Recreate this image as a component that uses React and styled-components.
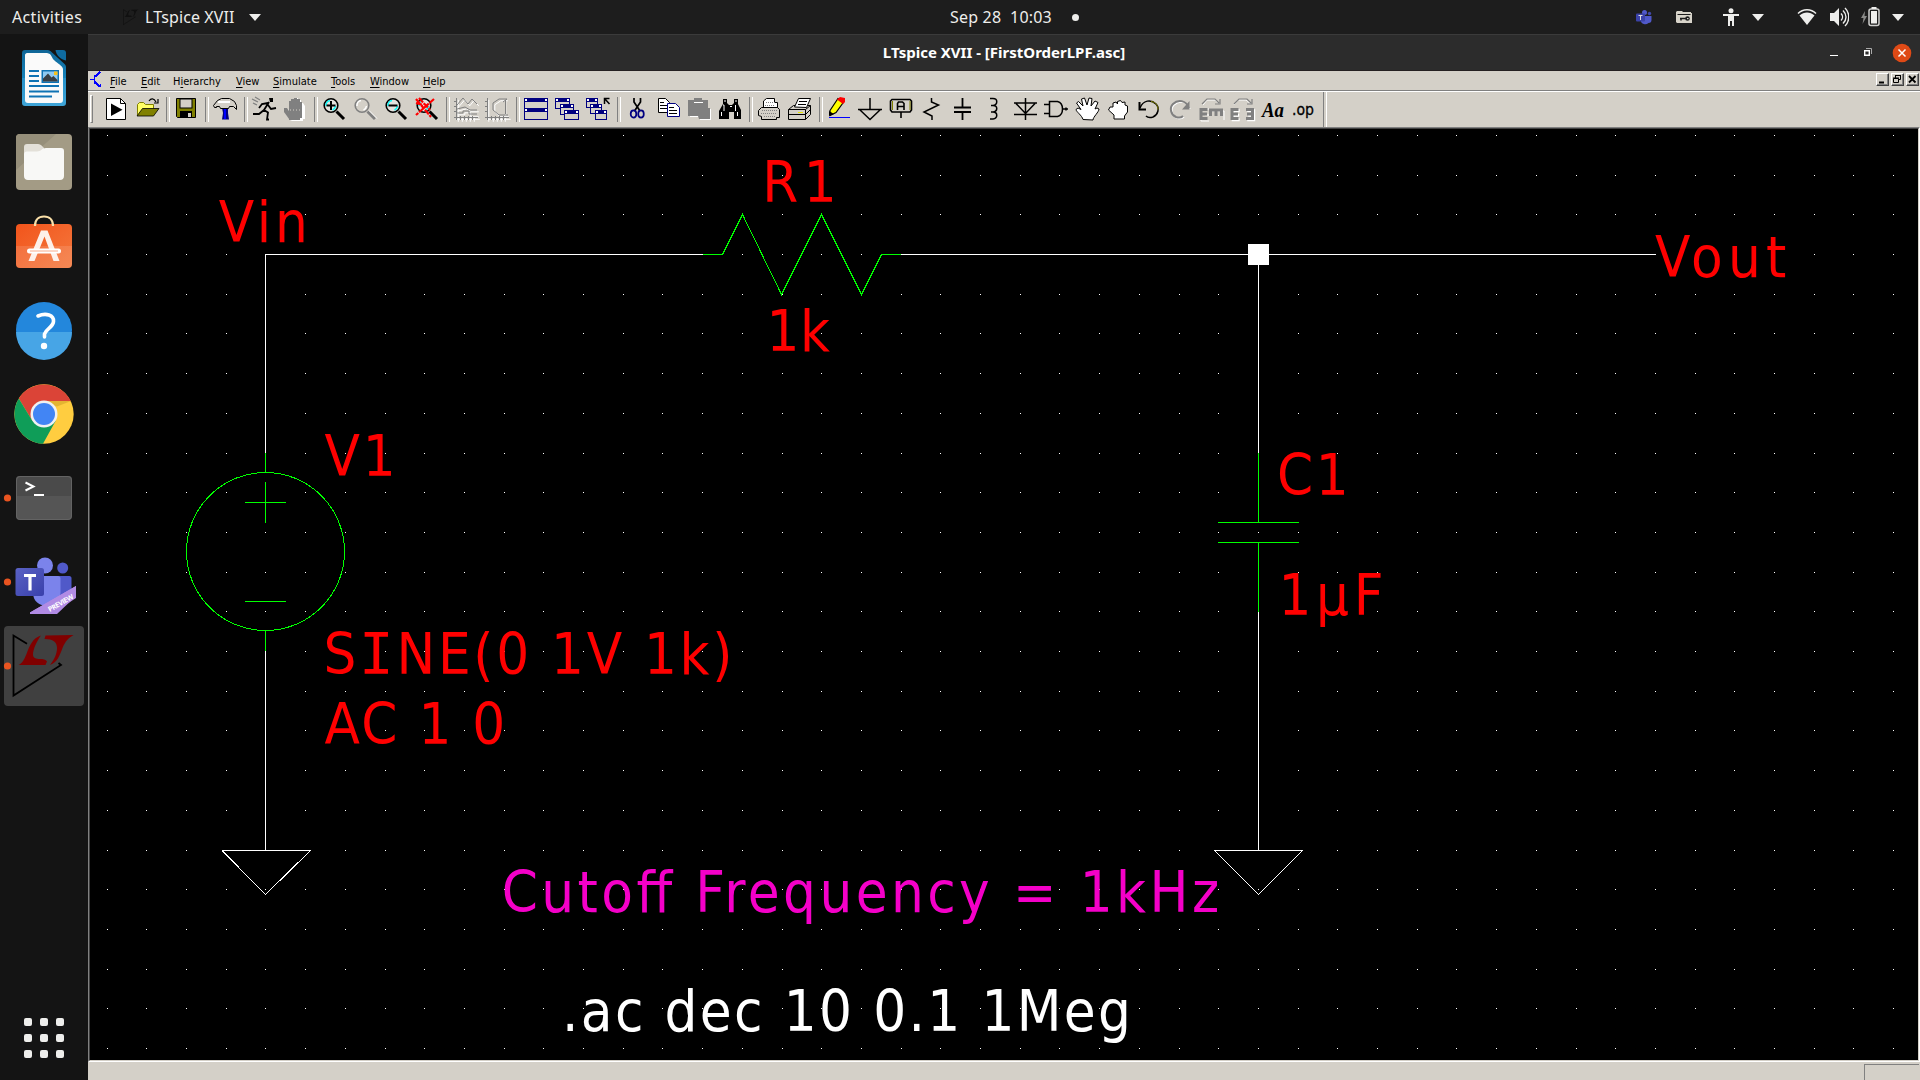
import React from "react";
import styled, { createGlobalStyle, css } from "styled-components";

const FACE = "#d4d0c8";
const UI = `"Noto Sans", "Open Sans", sans-serif`;

const GlobalStyle = createGlobalStyle`
  * { box-sizing: border-box; }
  body { margin: 0; background: #141414; overflow: hidden; }
`;

const Screen = styled.div`
  width: 1920px;
  height: 1080px;
  display: flex;
  flex-direction: column;
  background: #141414;
  font-family: ${UI};
`;

/* ---------- top panel ---------- */
const Panel = styled.header`
  height: 34px;
  flex: none;
  display: flex;
  align-items: center;
  background: #1d1d1d;
  color: #eeeeec;
  font-size: 16px;
  line-height: 34px;
  white-space: pre;
`;
const PanelLeft = styled.div`
  width: 950px;
  display: flex;
  align-items: center;
  padding-left: 12px;
`;
const PanelText = styled.span`
  width: ${(p) => p.$w}px;
  letter-spacing: ${(p) => p.$ls || 0}px;
`;
const Spacer = styled.span`
  width: ${(p) => p.$w}px;
  flex: none;
`;
const Dot = styled.span`
  width: 7px;
  height: 7px;
  border-radius: 50%;
  background: #eeeeec;
`;
const Tray = styled.div`
  margin-left: auto;
  padding-right: 16px;
  display: flex;
  align-items: center;
  svg { display: block; }
`;

/* ---------- dock ---------- */
const Body = styled.div`
  flex: 1;
  min-height: 0;
  display: flex;
`;
const Dock = styled.nav`
  width: 88px;
  flex: none;
  display: flex;
  flex-direction: column;
  padding: 2px 0 22px;
  background: #141414;
`;
const DockItem = styled.div`
  height: 84px;
  svg { display: block; }
`;
const AppsGrid = styled.div`
  margin: auto 0 0 24px;
  display: grid;
  grid-template-columns: repeat(3, 8px);
  grid-auto-rows: 8px;
  gap: 8px;
`;
const AppsDot = styled.span`
  border-radius: 2px;
  background: #eeeeec;
`;

/* ---------- window ---------- */
const Win = styled.main`
  flex: 1;
  min-width: 0;
  display: flex;
  flex-direction: column;
  background: ${FACE};
`;
const TitleBar = styled.div`
  height: 37px;
  flex: none;
  display: grid;
  grid-template-columns: 1fr auto 1fr;
  align-items: center;
  background: #2c2c2c;
  border-top: 1px solid #3b3b3b;
  border-bottom: 1px solid #241f21;
  color: #fff;
  font: 700 15px/35px ${UI};
`;
const TitleText = styled.span`
  grid-column: 2;
  letter-spacing: ${(p) => p.$ls}px;
`;
const TitleButtons = styled.div`
  display: flex;
  justify-content: flex-end;
  padding-right: 8px;
  svg { display: block; }
`;
const MenuBar = styled.div`
  height: 21px;
  flex: none;
  display: flex;
  align-items: flex-start;
  padding-left: 2px;
  border-bottom: 1px solid #fff;
  box-shadow: inset 0 -1px 0 #808080;
  background: ${FACE};
  color: #000;
  font: 11px/20px "DejaVu Sans Condensed", "DejaVu Sans", sans-serif;
  font-stretch: condensed;
  svg { display: block; }
`;
const MenuItem = styled.span`
  width: ${(p) => p.$w}px;
  height: 20px;
  padding-top: 1px;
  white-space: nowrap;
  letter-spacing: ${(p) => p.$ls || 0}px;
  u { text-underline-offset: 2px; text-decoration-thickness: 1px; }
`;
const MdiButtons = styled.div`
  display: flex;
  gap: 2px;
  margin: 2px 1px 0 auto;
`;
const MdiButton = styled.span`
  width: 13px;
  height: 13px;
  background: ${FACE};
  border: 1px solid;
  border-color: #fff #404040 #404040 #fff;
  box-shadow: inset -1px -1px 0 #808080;
`;
const ToolBar = styled.div`
  height: 35px;
  flex: none;
  display: flex;
  padding-left: 2px;
  background: ${FACE};
`;
const Grip = styled.span`
  width: 3px;
  height: 28px;
  margin: 3px 7.5px 0 0;
  border: 1px solid;
  border-color: #fff #808080 #808080 #fff;
`;
const ToolButton = styled.span`
  width: 31px;
  flex: none;
  padding: 5px 3.5px 0;
  svg { display: block; }
`;
const ToolSep = styled.span`
  width: 8px;
  flex: none;
  padding-left: 3px;
  &::before {
    content: "";
    display: block;
    width: 2px;
    height: ${(p) => (p.$tall ? 35 : 25)}px;
    margin-top: ${(p) => (p.$tall ? 0 : 5)}px;
    border-left: 1px solid #808080;
    border-right: 1px solid #fff;
  }
`;
const Sheet = styled.div`
  flex: 1;
  min-height: 0;
  background: #000;
  border: solid;
  border-width: 1px 1px 1px 1px;
  border-color: #808080 #fff #fff #808080;
`;
const SheetInner = styled.div`
  width: 1830px;
  height: 933px;
  border: 1px solid;
  border-color: #404040 ${FACE} ${FACE} #404040;
  svg { display: block; }
`;
const StatusBar = styled.div`
  height: 18px;
  flex: none;
  display: flex;
  justify-content: flex-end;
  padding: 2px 1px 0 0;
  background: ${FACE};
`;
const StatusCell = styled.span`
  width: 55px;
  border-left: 1px solid #808080;
  border-top: 1px solid #808080;
`;

/* ---------- toolbar icons, each on a 24px board ---------- */
const K = { stroke: "#000", fill: "none", strokeWidth: 1.5 };
const G = { stroke: "#808080", fill: "none", strokeWidth: 1.2 };
const Lens = ({ grey }) => (
  <>
    <path d="M14.5 14.5L22 22" stroke={grey ? "#808080" : "#000"} strokeWidth="3" />
    {grey && <path d="M16 13.5L24 21.5" stroke="#fff" strokeWidth="1" />}
    <circle cx="9" cy="8.5" r="6.8" fill={grey ? "#d4d0c8" : "#e4e2de"} stroke={grey ? "#808080" : "#000"} strokeWidth="1.6" />
    <path d="M4 9a5 5 0 0 1 4-5.5M13.5 9a5 5 0 0 1-3 4" fill="none" stroke={grey ? "#fff" : "#0ff"} strokeWidth="1.5" />
  </>
);
const Frame = ({ x, y, w, h }) => (
  <>
    <rect x={x + 0.5} y={y + 0.5} width={w - 1} height={h - 1} fill="#fff" stroke="#000080" />
    <rect x={x} y={y} width={w} height="4" fill="#000080" />
    <rect x={x + 1} y={y + 1} width="2" height="2" fill="#fff" />
    <rect x={x + w - 3} y={y + 1} width="2" height="2" fill="#fff" />
    <rect x={x + 1} y={y + 4} width={w - 2} height={h - 5} fill={FACE} />
  </>
);

const ICONS = {
  run: (
    <>
      <path d="M2.5 1.5h14l5 5v16h-19z" fill="#fff" stroke="#000" />
      <path d="M16.5 1.5v5h5" {...K} strokeWidth="1" />
      <path d="M7 6.5v12.5l11.5-6.2z" fill="#000" />
    </>
  ),
  open: (
    <>
      <path d="M2.5 18.5v-11l2-2h4l2 2h8v4" fill="#ff6" stroke="#808000" />
      <path d="M2 19l5.5-7.5h16.500l-5.5 7.5z" fill="#808000" stroke="#000" strokeWidth=".8" />
      <path d="M14 4c2-3 5-3 7 1M23 2v4h-4" {...K} strokeWidth="1.2" />
    </>
  ),
  save: (
    <>
      <path d="M2.500 1.500h19v19h-18l-1-1z" fill="#808000" stroke="#000" />
      <rect x="6" y="2" width="12" height="9" fill={FACE} stroke="#000" strokeWidth="1" />
      <rect x="6" y="14" width="12" height="7" fill="#000" />
      <rect x="14" y="16" width="3" height="4" fill={FACE} />
    </>
  ),
  hammer: (
    <>
      <path d="M9 11h6v5l1 6.500h-7l1-6.500z" fill="#000080" />
      <path d="M11 12h2v10h-2z" fill="#00f" />
      <path d="M.5 8.500l4-5 4-2h8l5 3 2 4v4l-3-3h-4l-1 2h-8l-1-2h-3v1h-2z" fill={FACE} stroke="#000" />
      <path d="M5 5h12" stroke="#fff" strokeWidth="2" />
    </>
  ),
  man: (
    <>
      <path d="M17 1h4v4h-3z" fill="#000" />
      <path d="M17 5l-5 8 4 2.500-1 7h2M12 13l-5 4H1M16 6L10 7l-3 4M16 8l3 4 5-1" {...K} strokeWidth="1.8" />
      <path d="M0 2l6 3M3 0l5 3M1 6l4 2" {...G} />
    </>
  ),
  stop: (
    <>
      <path d="M7 23l-5-7 0-4h3l1 2V4h3V2h3v-1h3v2h3v3h2l2 3v13h-2v2H9z" fill="#fff" />
      <path d="M6 22l-5-7v-4h3l2 3V4h2V2h3V1h3v1h3v3h2v16h-2v2H6z" fill="#808080" />
      <path d="M7 13h12" stroke="#d4d0c8" strokeDasharray="1 2" />
    </>
  ),
  zoomin: <><Lens /><path d="M4.500 8.500h9M9 4v9" {...K} strokeWidth="2" /></>,
  zoom: <Lens grey />,
  zoomout: <><Lens /><path d="M4.500 8.500h9" {...K} strokeWidth="2" /></>,
  zoomfit: (
    <>
      <Lens />
      <path d="M1 2l15 18M19 2L1 18M4 1l11 12M1 6l7 2" stroke="#f00" strokeWidth="2.200" fill="none" strokeDasharray="6 1" />
    </>
  ),
  plot: (
    <>
      <path d="M3.500 2v22M1 21.500h24M1 5.500h3M1 10.500h3M1 15.500h3M7.500 20v4M11.500 20v4M15.500 20v4M19.500 20v4M4 9l6-7 5 6 4-5 5 5M4 13l8-2 5 3h7M4 17h6v-2h6v4h8" fill="none" stroke="#fff" transform="translate(.8 .8)" />
      <path d="M2.500 1v22M0 20.500h24M0 4.500h3M0 9.500h3M0 14.500h3M6.500 19v4M10.500 19v4M14.500 19v4M18.500 19v4M3 8l6-7 5 6 4-5 5 5M3 12l8-2 5 3h7M3 16h6v-2h6v3h8" {...G} strokeWidth="1" />
    </>
  ),
  polar: (
    <>
      <path d="M3 2v22M1 21.500h24M7.500 20v4M11.500 20v4M15.500 20v4M19.500 20v4M22 3h-7l-6 4v7l5 5h9M20 4v14" fill="none" stroke="#fff" transform="translate(.8 .8)" />
      <path d="M2.500 1v22M0 20.500h24M0 4.500h3M0 9.500h3M0 14.500h3M6.500 19v4M10.500 19v4M14.500 19v4M18.500 19v4M22 2h-8l-6 4v7l6 5h9M20.500 3v14M18 5l4-3" {...G} strokeWidth="1" />
    </>
  ),
  tile: <><Frame x={0} y={1} w={24} h={12} /><Frame x={0} y={11} w={24} h={12} /></>,
  cascade: <><Frame x={0} y={1} w={15} h={11} /><Frame x={5} y={7} w={14} h={11} /><Frame x={9} y={13} w={15} h={10} /></>,
  closeall: (
    <>
      <Frame x={0} y={1} w={12} h={10} /><Frame x={4} y={7} w={12} h={10} /><Frame x={9} y={13} w={12} h={10} />
      <path d="M18.500 7V1.500h5M18.500 1.500l5 5.500" {...K} />
    </>
  ),
  cut: (
    <>
      <path d="M9 1v4l6 9M15.500 1v4l-6 9" {...K} strokeWidth="1.700" />
      <ellipse cx="8.500" cy="17" rx="2.800" ry="3.600" fill="none" stroke="#000080" strokeWidth="1.700" />
      <ellipse cx="16" cy="17" rx="2.800" ry="3.600" fill="none" stroke="#000080" strokeWidth="1.700" />
    </>
  ),
  copy: (
    <>
      <path d="M2.500 1.500h7l4 4v10h-11z" fill="#fff" stroke="#000" />
      <path d="M4 5.500h4M4 8.500h7M4 11.500h7" {...K} strokeWidth="1" />
      <path d="M11.500 6.500h8l4 4v9h-12z" fill="#fff" stroke="#000080" />
      <path d="M13 10.500h5M13 13.500h8M13 16.500h8" {...K} strokeWidth="1" />
    </>
  ),
  paste: (
    <>
      <path d="M3 4h18v8h3v11H13v-3H3z" fill="#fff" />
      <path d="M1 3h6V1h8v2h6v8h2v11H12l-1-3H1z" fill="#808080" />
      <path d="M7 5.500h9" stroke="#fff" />
    </>
  ),
  find: (
    <>
      <path d="M5 2h4v4l2 2h3l2-2V2h4v5l3 6v9h-7v-7h-5v7H1v-8l4-7z" fill="#000" />
      <path d="M6 4h2M17 4h2M5 8h1v6M17.500 8v6M3.500 15v4M19.500 15v4M12 9.500h2" stroke="#fff" fill="none" />
    </>
  ),
  print: (
    <>
      <path d="M6.500 12V4l3-2.500h8v4h3v6.500" fill="#fff" stroke="#000" />
      <path d="M1.500 18.500v-5l3-3h16l2 2v8h-3v2h-15v-3z" fill={FACE} stroke="#000" />
      <path d="M9 5.500h9M8 8.500h10M5 13.500h15M4 16.500h15M7 19.500h12" stroke="#808080" strokeDasharray="1 1" />
    </>
  ),
  setup: (
    <>
      <path d="M0.500 12.500l5-4h17v9l-5 5h-17z" fill={FACE} stroke="#000" />
      <path d="M6.500 10l4-8.500h12l-4 9z" fill="#fff" stroke="#000" />
      <path d="M.5 12.500h17l5-4M17.500 12.500v10M.5 17.500h17l5-5M11 4.500h8M10 7.500h8" {...K} strokeWidth="1" />
      <path d="M10 15.500h5" stroke="#e6e600" />
    </>
  ),
  wire: (
    <>
      <path d="M3 13.500L11 1.500l6 3-8 11-6 3z" fill="#ff0" stroke="#000" strokeWidth="1.200" />
      <path d="M10 2.500l3-2.500 5 1v4l-2 2z" fill="#f00" />
      <path d="M2 19v-5l5 3z" fill="#000" />
      <path d="M2 20.500h21" stroke="#00f" />
    </>
  ),
  ground: <path d="M12 1v11M0 12.500h24M1.500 12.500L12 22.500l10.500-10" {...K} />,
  label: (
    <>
      <path d="M3 2.500h18l1.500 1.500v9l-1.500 2H3l-1.500-2v-9z" fill={FACE} stroke="#000" strokeWidth="1.600" />
      <path d="M3.500 4v9M21 4v9" stroke="#808000" />
      <path d="M8.500 13V6.500l1-1.500h4l1.500 1.500V13M8.500 9.500H15M12 15v6" {...K} strokeWidth="1.600" />
    </>
  ),
  resistor: <path d="M11.500 1v4l7 3-14.500 7 8 4v4" {...K} />,
  cap: <path d="M11.500 1v9M11.500 15v8M3 10.500h17M3 15h17" {...K} strokeWidth="1.800" />,
  ind: <path d="M8 1.500h3c5 0 5 6 0 7h-2 2c5 0 5 6 0 6.500h-2 2c5 0 5 6.500 0 7H8" {...K} />,
  diode: <path d="M12.500 1v22M1 6h23M3 6.500l9.500 10L22 6.500M1 17.500h23" {...K} />,
  gate: <path d="M0 7.500h5M0 16.500h5M5.500 4.500h8c4 1 5 5 5 7.500s-1 6.500-5 7.500h-8zM18 12h6M22 10.500v3" {...K} />,
  move: (
    <path d="M8 22.500c-1-4-7-8-7-10l2-1.500 3 1.500L1.500 6l2-1.500L8 9 6.500 2l3-1L12 8l2-7 3 .5L16 9l4-5 3 1.500-3 6.500 2-1 2 1c0 3-6 8-6 11z" fill="#fff" stroke="#000" />
  ),
  drag: (
    <path d="M8 22v-4L2.500 13l1.500-3h3V6l3-1 1.500 2V4.500l3-1 1.500 2 3-.500v3l2.500 1v6l-3 4v3z" fill="#fff" stroke="#000" />
  ),
  undo: (
    <>
      <path d="M3 11C6 3 14 2 19 7c4 4 2 11-3 13-3 1-6 0-7-1" {...K} />
      <path d="M14 4.500c5 .500 7 4 7 8" fill="none" stroke="#808000" />
      <path d="M2.500 5v7.500H9" {...K} strokeWidth="2" />
    </>
  ),
  redo: (
    <>
      <path d="M22 12C19 4 11 3 6 8c-4 4-2 11 3 13 3 1 6 0 7-1" fill="none" stroke="#fff" strokeWidth="1.500" />
      <path d="M21 11C18 3 10 2 5 7c-4 4-2 11 3 13 3 1 6 0 7-1" fill="none" stroke="#808080" strokeWidth="2" />
      <path d="M21.500 4v8.500H14z" fill="#808080" />
    </>
  ),
  rotate: (
    <>
      <path d="M4 7l4-5h8l5 4" fill="none" stroke="#fff" transform="translate(0 1)" />
      <path d="M3 7l5-5h8l4 4M21 2v5h-5" {...G} />
      <path d="M9 23H1V11h8M9 17H5M11 13h13v9" fill="none" stroke="#fff" transform="translate(1 1)" />
      <path d="M8.500 12.500H2v9h6.500M2 17h6M10 13h14M11.500 12v7M17 12v7M22.500 12v7" fill="none" stroke="#808080" strokeWidth="3" />
    </>
  ),
  mirror: (
    <>
      <path d="M4 7l4-5h8l5 4" fill="none" stroke="#fff" transform="translate(0 1)" />
      <path d="M4 7l5-5h8l4 4M22 2v5h-5" {...G} />
      <path d="M8.500 12.500H2v9h6.500M2 17h6M16 12.500h6.500v9H16M22 17h-5" fill="none" stroke="#fff" strokeWidth="3" transform="translate(1.200 1.200)" />
      <path d="M8.500 12.500H2v9h6.500M2 17h6M16 12.500h6.500v9H16M22 17h-5" fill="none" stroke="#808080" strokeWidth="3" />
    </>
  ),
  text: (
    <text x="1" y="20" fontFamily="Liberation Serif, serif" fontSize="20" fontWeight="700" fontStyle="italic" textLength="22" lengthAdjust="spacingAndGlyphs">Aa</text>
  ),
  op: (
    <text x="0" y="18" fontFamily="DejaVu Sans, sans-serif" fontSize="16" fontWeight="400" stroke="#000" strokeWidth=".3" textLength="22" lengthAdjust="spacingAndGlyphs">.op</text>
  ),
};

const TOOLS = [
  "run", "open", "|", "save", "|", "hammer", "|", "man", "stop", "|",
  "zoomin", "zoom", "zoomout", "zoomfit", "|", "plot", "polar", "|",
  "tile", "cascade", "closeall", "|", "cut", "copy", "paste", "find", "|",
  "print", "setup", "|", "wire", "ground", "label", "resistor", "cap", "ind",
  "diode", "gate", "move", "drag", "undo", "redo", "rotate", "mirror", "text", "op",
];

/* ---------- dock icons, each on an 88x84 board ---------- */
const LtMark = ({ outline = "#000", red = "#800000" }) => (
  <>
    <path d="M27 19.800L13.500 11.500v60L61 41l-2.500-2" fill="none" stroke={outline} strokeWidth="1.800" />
    <path d="M41 11.500c-4 5-8 14-8 19 0 3.500 3 4.500 7 4.500 3 0 6 .500 7 2.500l-1.500 3.500H18.500c4-2 5.500-5 8-11 3-8 6-16 14.500-18.500z" fill={red} />
    <path d="M45.500 11.500l28-.500c-5 3-8 6-11 13-3 8-5 14-12.500 17 4-5 7-11 7-17 0-6-4-9-12.500-9z" fill={red} />
  </>
);

const DOCK = {
  writer: (
    <>
      <defs>
        <linearGradient id="wr" x1="0" y1="0" x2="0" y2="1">
          <stop offset="0" stopColor="#0f6596" /><stop offset=".5" stopColor="#1583bb" />
          <stop offset=".5" stopColor="#2691c9" /><stop offset="1" stopColor="#3fa5d8" />
        </linearGradient>
      </defs>
      <path d="M25 14h22.500c2 0 3 1 4 2L64.500 28c1 1 1.500 2 1.500 3.500V67c0 2-1 3-3 3H25c-2 0-3-1-3-3V17c0-2 1-3 3-3z" fill="url(#wr)" />
      <path d="M55.500 14H63c2 0 3 1 3 3v7.500C61 24 56 19 55.500 14z" fill="#0f6ba0" />
      <path d="M27 17h20c5 1 4 4 7 7s9 6 9 9v31c0 2-1 3-3 3H28c-2 0-3-1-3-3V19c0-1 1-2 2-2z" fill="#fafafa" />
      <path d="M29 35h10M29 40h10M29 45h10M29 50h30M29 55.500h30M29 60.500h23" stroke="#0f73b4" strokeWidth="2" />
      <rect x="41.500" y="34" width="17.500" height="13" fill="#0f73b4" />
      <rect x="43" y="35.500" width="14.500" height="10" fill="#8fcaf2" />
      <rect x="54" y="35.500" width="3.500" height="3.500" fill="#f8c21c" />
      <path d="M43 45.500v-3l5-5 3.500 4 2-1.500 4 4v1.500z" fill="#3a3f44" />
    </>
  ),
  files: (
    <>
      <rect x="16" y="14" width="56" height="56" rx="4" fill="#a39b85" />
      <path d="M16 50V18a4 4 0 0 1 4-4h36z" fill="#968f7a" />
      <path d="M24 45V27c0-2 1-3 3-3h11c2 0 3 1 4 2l2 2v10z" fill="#e3e0d8" />
      <path d="M24 34.500c0-2 1-3 3-3h10c4 0 5-3.500 9-3.500h15c2 0 3 1 3 3v25c0 2.500-1.500 4-4 4H28c-2.500 0-4-1.500-4-4z" fill="#f8f8f6" />
    </>
  ),
  software: (
    <>
      <defs>
        <linearGradient id="sw" x1="0" y1="0" x2="1" y2="1">
          <stop offset="0" stopColor="#f2541b" /><stop offset="1" stopColor="#f4793e" />
        </linearGradient>
      </defs>
      <rect x="16" y="20" width="56" height="44" rx="4" fill="url(#sw)" />
      <path d="M16 42h56v18a4 4 0 0 1-4 4H20a4 4 0 0 1-4-4z" fill="#fff" opacity=".12" />
      <path d="M35 22c0-6 3.500-9.500 9-9.500S53 16 53 22" fill="none" stroke="#fbe0a8" strokeWidth="2.200" />
      <path d="M41 26.500h6.500L59.500 57H53.500L44.500 32.500 34.500 57H28.500z" fill="#fdf0ea" />
      <rect x="27" y="44.500" width="34" height="5" rx="2.500" fill="#fff" />
      <path d="M30 47h28" stroke="#f9bfa6" strokeWidth="1.300" />
    </>
  ),
  help: (
    <>
      <circle cx="44" cy="42" r="28" fill="#2387dc" />
      <path d="M16 44h56a28 28 0 0 1-56 0z" fill="#47a5e6" />
      <path d="M38 28c8-3.500 16-1 15.500 5.500-.500 6-7.500 7-9 12.500v3" fill="none" stroke="#fff" strokeWidth="3.600" strokeLinecap="round" />
      <circle cx="44" cy="58" r="3.200" fill="#fff" />
    </>
  ),
  chrome: (
    <>
      <circle cx="44" cy="42" r="29.700" fill="#ffcd40" />
      <path d="M18.800 26.500A29.700 29.700 0 0 1 70.700 29H44L32.300 48.700z" fill="#db4437" />
      <path d="M18.800 26.500A29.700 29.700 0 0 0 43 71.700l12.700-23H32.300z" fill="#0f9d58" />
      <path d="M44 29h27l-14 5.500z" fill="#d9a92c" opacity=".7" />
      <circle cx="44" cy="42" r="13.500" fill="#f1f1f1" />
      <circle cx="44" cy="42" r="11" fill="#4285f4" />
    </>
  ),
  terminal: (
    <>
      <rect x="16" y="20" width="56" height="44" rx="4" fill="#555" />
      <path d="M16 40V24a4 4 0 0 1 4-4h48a4 4 0 0 1 4 4v16z" fill="#4a4a4a" />
      <path d="M16.500 60V24a3.500 3.500 0 0 1 3.500-3.500h48a3.500 3.500 0 0 1 3.500 3.500v36a3.500 3.500 0 0 1-3.500 3.500H20a3.500 3.500 0 0 1-3.500-3.500z" fill="none" stroke="#636363" />
      <path d="M25.500 26.500l8 4-8 4" fill="none" stroke="#fff" strokeWidth="2" />
      <path d="M34 39h10" stroke="#fff" strokeWidth="2" />
    </>
  ),
  teams: (
    <>
      <defs>
        <linearGradient id="tm" x1="0" y1="0" x2="1" y2="1">
          <stop offset="0" stopColor="#5a62c4" /><stop offset="1" stopColor="#3940ab" />
        </linearGradient>
      </defs>
      <circle cx="62.700" cy="28" r="5.500" fill="#5059c9" />
      <path d="M58 36h11.500c1 0 2 1 2 2v14c0 7-5 11-11 10z" fill="#5059c9" />
      <circle cx="45" cy="25.500" r="8" fill="#7b83eb" />
      <path d="M33 36h25c1.500 0 2.500 1 2.500 2.500V52c0 8-6 14-13.500 14S33 61 33 53z" fill="#7b83eb" />
      <rect x="15.500" y="28" width="28.500" height="28" rx="2.500" fill="url(#tm)" />
      <path d="M24 35.500h12M30 35.500v15" stroke="#fff" strokeWidth="3.200" />
      <path d="M76 46v10L57 74H30v-1.500z" fill="#b18be4" />
      <path d="M76 46v12L52 74H30v-1.500z" fill="#b18be4" />
      <text x="60.500" y="65.500" fontFamily="Open Sans, sans-serif" fontSize="7" fontWeight="700" fill="#fff" textAnchor="middle" textLength="28" transform="rotate(-30 60.500 62.700)">PREVIEW</text>
    </>
  ),
  ltspice: (
    <>
      <rect x="4" y="2" width="80" height="80" rx="4" fill="#404040" />
      <LtMark />
    </>
  ),
};
const RUNNING = ["terminal", "teams", "ltspice"];

/* ---------- schematic ---------- */
const PITCH = 39.7;
const gridPath = () => {
  let d = "";
  for (let r = 0; r < 24; r++)
    for (let c = 0; c < 46; c++)
      d += `M${Math.floor(107.1 + c * PITCH)} ${Math.floor(135.42 + r * PITCH)}h1v1h-1z`;
  return d;
};
const Wire = styled.path`
  fill: none;
  stroke: ${(p) => (p.$part ? "#00ff00" : "#ffffff")};
  stroke-width: 1px;
  shape-rendering: crispEdges;
`;
const Label = styled.text`
  font-family: "DejaVu Sans Condensed", "DejaVu Sans", sans-serif;
  font-stretch: condensed;
  font-size: 57.6px;
  fill: ${(p) => p.$color || "#ff0000"};
  white-space: pre;
`;
const Slab = styled.tspan`
  font-family: "DejaVu Sans Mono", monospace;
  font-stretch: normal;
`;

const LABELS = [
  { x: 218.8, y: 242, w: 89, t: "Vin" },
  { x: 762.3, y: 202, w: 74.5, t: "R1" },
  { x: 766.6, y: 351, w: 63.5, t: "1k" },
  { x: 1655, y: 277, w: 131.2, t: "Vout" },
  { x: 324.6, y: 476, w: 71.2, t: "V1" },
  { x: 323.5, y: 674, w: 409, t: <>S<Slab>I</Slab>NE(0 1V 1k)</> },
  { x: 324.6, y: 744, w: 180.7, t: "AC 1 0" },
  { x: 1277, y: 495, w: 71.7, t: "C1" },
  { x: 1278.5, y: 615, w: 105, t: "1µF" },
  { x: 501.7, y: 912, w: 717.4, t: "Cutoff Frequency = 1kHz", color: "#f400c8" },
  { x: 562, y: 1031, w: 569, t: ".ac dec 10 0.1 1Meg", color: "#ffffff" },
];

const Schematic = () => (
  <svg width="1828" height="931" viewBox="90 129 1828 931">
    <path d={gridPath()} fill="#fff" shapeRendering="crispEdges" />
    <Wire d="M265.500 453V254.500H703M901 254.500H1656M1258.500 254V453M265.500 651V850M1258.500 612V850" />
    <Wire d="M222 850.500H310.500L265.500 894.500L222 850.500M1214.500 850.500H1302.500L1258.500 894.500L1214.500 850.500" />
    <rect x="1248" y="244" width="21" height="21" fill="#fff" />
    <Wire $part d="M703 254.500H722.500L742.500 214.500L781.500 294.500L821.500 214.500L861.500 294.500L881.500 254.500H901" />
    <Wire $part d="M265.500 453V472M265.500 630V651M245 502.500H286M265.500 482V523M245 601.500H286" />
    <Wire $part d="M186.500 551.500a79 79 0 1 1 158 0a79 79 0 1 1 -158 0" />
    <Wire $part d="M1258.500 453V522M1218 522.500H1299M1218 542.500H1299M1258.500 542V612" />
    {LABELS.map((l, i) => (
      <Label key={i} x={l.x} y={l.y} textLength={l.w} $color={l.color}>{l.t}</Label>
    ))}
  </svg>
);

const Caret = () => (
  <svg width="12" height="7" viewBox="0 0 12 7"><path d="M0 0h12L6 7z" fill="#eeeeec" /></svg>
);

const MENUS = [
  ["", "F", "ile", 31], ["", "E", "dit", 32], ["H", "i", "erarchy", 63], ["", "V", "iew", 37],
  ["", "S", "imulate", 58], ["", "T", "ools", 39], ["", "W", "indow", 53], ["", "H", "elp", 40],
];

export default function App() {
  return (
    <Screen>
      <GlobalStyle />
      <Panel>
        <PanelLeft>
          <PanelText $w={111} $ls={0.35}>Activities</PanelText>
          <svg width="16" height="18" viewBox="12 9 64 64">
            <LtMark outline="#0a0a0a" red="#101010" />
          </svg>
          <Spacer $w={6} />
          <PanelText $w={104} $ls={0.1}>LTspice XVII</PanelText>
          <Caret />
        </PanelLeft>
        <PanelText $w={122} $ls={0.2}>Sep 28  10:03</PanelText>
        <Dot />
        <Tray>
          <svg width="16" height="15" viewBox="0 0 16 15">
            <circle cx="8.500" cy="2.500" r="2.500" fill="#5059c9" /><circle cx="13.500" cy="3.500" r="1.700" fill="#4048a8" />
            <path d="M5 6h10.500v4a3 3 0 0 1-3 3A5 5 0 0 1 5 12z" fill="#5059c9" />
            <rect y="3.500" width="9" height="8" rx="1" fill="#3b42a8" />
            <path d="M2.500 5.500h4M4.500 5.500v4.500" stroke="#ddd" />
          </svg>
          <Spacer $w={24} />
          <svg width="16" height="12" viewBox="0 0 16 12">
            <path d="M0 1l1-1h5l1 1h8v1h1v10H1L0 11z" fill="#d8d4ca" />
            <path d="M1.500 3.500h13" stroke="#1d1d1d" /><circle cx="11.500" cy="7.500" r="2.300" fill="#1d1d1d" />
            <path d="M4 7.500h7M5 7.500v2" stroke="#1d1d1d" strokeWidth="1.500" /><rect x="11" y="7" width="1.500" height="1.200" fill="#d8d4ca" />
          </svg>
          <Spacer $w={31} />
          <svg width="16" height="18" viewBox="0 0 16 18">
            <circle cx="8" cy="2.700" r="2.500" fill="#eeeeec" />
            <path d="M0 6h16v2h-5v10H9v-5H7v5H5V8H0z" fill="#eeeeec" />
          </svg>
          <Spacer $w={13} /><Caret /><Spacer $w={33} />
          <svg width="20" height="17" viewBox="0 0 20 17">
            <path d="M1 4.500C6-.500 14-.500 19 4.500" fill="none" stroke="#eeeeec" strokeWidth="1.500" />
            <path d="M2.500 6.500c4.500-4 10.500-4 15 0L10 16z" fill="#eeeeec" />
          </svg>
          <Spacer $w={13} />
          <svg width="19" height="20" viewBox="0 0 19 20">
            <path d="M0 6h4l5-5v18l-5-5H0z" fill="#eeeeec" />
            <path d="M11 6.500c2 2 2 5 0 7M13 3.500c4 4 4 9 0 13M15 1c5 5 5 13 0 18" fill="none" stroke="#eeeeec" strokeWidth="1.400" />
          </svg>
          <Spacer $w={12} />
          <svg width="19" height="20" viewBox="0 0 19 20">
            <path d="M4 4L0 11h2.500L1.500 17 6 9H3.500z" fill="#8a8a88" />
            <rect x="8" y="2" width="10" height="16.500" rx="2" fill="none" stroke="#d0d0ce" strokeWidth="1.500" />
            <rect x="10.500" y="0" width="5" height="2" fill="#eeeeec" /><rect x="10" y="4" width="6" height="12.500" fill="#eeeeec" />
          </svg>
          <Spacer $w={12} /><Caret />
        </Tray>
      </Panel>
      <Body>
        <Dock>
          {Object.entries(DOCK).map(([name, art]) => (
            <DockItem key={name}>
              <svg width="88" height="84" viewBox="0 0 88 84">
                {art}
                {RUNNING.includes(name) && <circle cx="7.500" cy="42" r="3.600" fill="#e95420" />}
              </svg>
            </DockItem>
          ))}
          <AppsGrid>{Array.from({ length: 9 }, (_, i) => <AppsDot key={i} />)}</AppsGrid>
        </Dock>
        <Win>
          <TitleBar>
            <TitleText $ls={0}>LTspice XVII - [FirstOrderLPF.asc]</TitleText>
            <TitleButtons>
              <svg width="82" height="20" viewBox="0 0 82 20">
                <path d="M0 12.500h8" stroke="#fff" />
                <path d="M34.700 7.700h4.600v4.600h-4.600z" fill="none" stroke="#fff" strokeWidth="1.400" />
                <path d="M36 5.500h5.500V11" fill="none" stroke="#aaa" />
                <circle cx="72" cy="10" r="9.300" fill="#df4a16" />
                <path d="M68.500 6.500l7 7M75.500 6.500l-7 7" stroke="#fff" strokeWidth="1.500" />
              </svg>
            </TitleButtons>
          </TitleBar>
          <MenuBar>
            <svg width="20" height="19" viewBox="0 0 20 19">
              <path d="M0 8.500h4M4.500 4v9M5 6l5-5M5 11l5 5M7.500 15.500h3v-3" fill="none" stroke="#00f" strokeWidth="1.500" shapeRendering="crispEdges" />
            </svg>
            {MENUS.map(([a, b, c, w]) => (
              <MenuItem key={b + c} $w={w}>{a}<u>{b}</u>{c}</MenuItem>
            ))}
            <MdiButtons>
              <MdiButton><svg width="11" height="11"><path d="M2 8.500h5" stroke="#000" strokeWidth="2" /></svg></MdiButton>
              <MdiButton><svg width="11" height="11"><path d="M3.500 4V1.500h5v4H7M1.500 4.500h5v4h-5zM1 4h6M3 1.500h6" fill="none" stroke="#000" /></svg></MdiButton>
              <MdiButton><svg width="11" height="11"><path d="M2 2l6.500 6.500M8.500 2L2 8.500" stroke="#000" strokeWidth="1.800" /></svg></MdiButton>
            </MdiButtons>
          </MenuBar>
          <ToolBar>
            <Grip />
            {TOOLS.map((t, i) =>
              t === "|" ? (
                <ToolSep key={i} />
              ) : (
                <ToolButton key={i}>
                  <svg width="24" height="25" viewBox="0 0 24 25" overflow="visible">{ICONS[t]}</svg>
                </ToolButton>
              )
            )}
            <ToolSep $tall />
          </ToolBar>
          <Sheet>
            <SheetInner><Schematic /></SheetInner>
          </Sheet>
          <StatusBar><StatusCell /></StatusBar>
        </Win>
      </Body>
    </Screen>
  );
}
